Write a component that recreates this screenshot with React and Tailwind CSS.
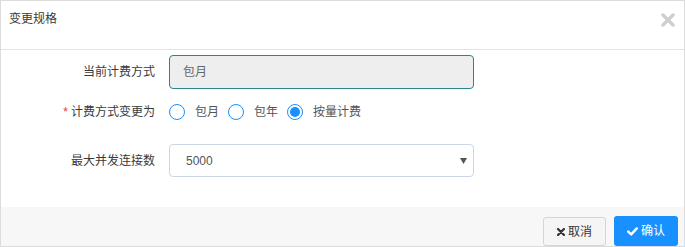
import React from "react";

const font = { fontFamily: '"Liberation Sans", "Noto Sans CJK SC", sans-serif' };

function Radio({ checked, label }) {
  return (
    <label className="flex items-center gap-[10px] mr-[9px]">
      <span className="w-[16px] h-[16px] rounded-full border border-[#1890ff] bg-white flex items-center justify-center">
        {checked && <span className="w-[10px] h-[10px] rounded-full bg-[#1890ff]" />}
      </span>
      <span className="text-[12px] text-[#555]">{label}</span>
    </label>
  );
}

export default function App() {
  return (
    <div
      className="w-[685px] h-[247px] border border-[#dcdcdc] bg-white flex flex-col text-[#333]"
      style={font}
    >
      <div className="h-[49px] shrink-0 border-b border-[#e3e3e3] flex items-start justify-between pl-[8px] pr-[9px] pt-[10px]">
        <span className="text-[12px] leading-[16px] text-[#3a3a3a]">变更规格</span>
        <svg width="14" height="14" viewBox="0 0 14 14" className="mt-[2px]">
          <path d="M2 2 L12 12 M12 2 L2 12" stroke="#cfcfcf" strokeWidth="3.4" strokeLinecap="round" />
        </svg>
      </div>
      <div className="flex-1 flex flex-col">
        <div className="flex items-center mt-[5px] h-[34px]">
          <div className="w-[154px] text-right text-[12px] text-[#3a3a3a]">当前计费方式</div>
          <div className="ml-[14px] w-[305px] h-[34px] rounded-[4px] border border-[#2e8585] bg-[#eeeeee] flex items-center pl-[13px] text-[12px] text-[#666]">
            包月
          </div>
        </div>
        <div className="flex items-center mt-[11px] h-[24px]">
          <div className="w-[154px] text-right text-[12px] text-[#3a3a3a]">
            <span className="text-[#e53935] mr-[3px]">*</span>计费方式变更为
          </div>
          <div className="ml-[14px] flex items-center">
            <Radio label="包月" />
            <Radio label="包年" />
            <Radio checked label="按量计费" />
          </div>
        </div>
        <div className="flex items-center mt-[20px] h-[33px]">
          <div className="w-[154px] text-right text-[12px] text-[#3a3a3a]">最大并发连接数</div>
          <div className="ml-[14px] w-[305px] h-[33px] rounded-[4px] border border-[#c9d7e6] bg-white flex items-center justify-between pl-[16px] pr-[6px] text-[12px] text-[#555]">
            <span>5000</span>
            <svg width="7" height="6" viewBox="0 0 7 6">
              <path d="M0 0 L7 0 L3.5 6 Z" fill="#555" />
            </svg>
          </div>
        </div>
      </div>
      <div className="h-[39px] shrink-0 bg-[#f7f7f7] flex items-end justify-end pr-[6px] gap-[8px]">
        <button className="h-[29px] w-[63px] rounded-[3px] border border-[#c9d7e6] bg-[#f5f5f5] flex items-center justify-center gap-[3px] text-[12px] text-[#333]">
          <svg width="8" height="8" viewBox="0 0 8 8">
            <path d="M1 1 L7 7 M7 1 L1 7" stroke="#333" strokeWidth="2.2" strokeLinecap="round" />
          </svg>
          取消
        </button>
        <button className="h-[30px] w-[64px] rounded-[3px] bg-[#1890ff] flex items-center justify-center gap-[3px] text-[12px] text-white">
          <svg width="11" height="9" viewBox="0 0 11 9">
            <path d="M1.2 4.6 L4.2 7.4 L9.8 1.4" stroke="#fff" strokeWidth="2.4" fill="none" strokeLinecap="round" strokeLinejoin="round" />
          </svg>
          确认
        </button>
      </div>
    </div>
  );
}
